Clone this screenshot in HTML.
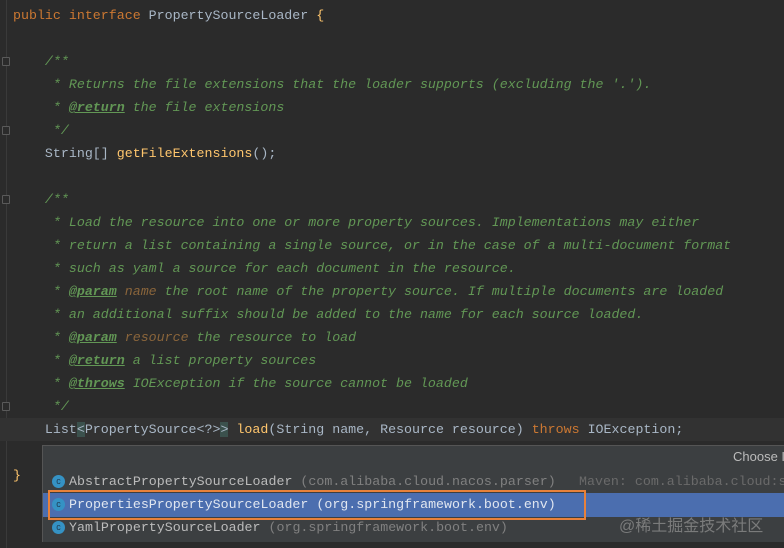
<!DOCTYPE html>
<html><head><meta charset="utf-8"><style>
body{margin:0;width:784px;height:548px;background:#2b2b2b;overflow:hidden;position:relative;font-family:"Liberation Mono",monospace;font-size:13.3px;}
.l{position:absolute;left:13px;white-space:pre;color:#a9b7c6;height:23px;line-height:23px}
.k{color:#cc7832}.c{color:#629755;font-style:italic}.t{color:#629755;font-style:italic;font-weight:bold;text-decoration:underline}
.p{color:#8a653b;font-style:italic}.f{color:#ffc66d}.g{color:#808080}
.gut{position:absolute;left:6px;top:0;width:1px;height:548px;background:#3a3a3a}
.fold{position:absolute;left:2px;width:8px;height:9px;border:1px solid #5a5a5a;border-radius:1px;box-sizing:border-box;background:#2b2b2b}
.pop{position:absolute;left:42px;top:445px;width:742px;height:96px;background:#3c3f41;border-top:1px solid #555;border-left:1px solid #555}
.row{position:absolute;left:0;width:742px;height:24px;line-height:24px;white-space:pre;color:#bbbbbb}
.ic{position:absolute;left:9px;top:5px;width:13px;height:13px;border-radius:50%;background:#3592c4;color:#1d3b52;font-size:9px;line-height:13px;text-align:center;font-family:"Liberation Sans",sans-serif}
.nm{position:absolute;left:26px}
</style></head><body>
<div class="gut"></div>
<div class="fold" style="top:57px"></div><div class="fold" style="top:126px"></div>
<div class="fold" style="top:195px"></div><div class="fold" style="top:402px"></div>
<div class="l" style="top:4px"><span class="k">public interface </span>PropertySourceLoader <span class="f">{</span></div>
<div class="l c" style="top:50px">    /**</div>
<div class="l c" style="top:73px">     * Returns the file extensions that the loader supports (excluding the '.').</div>
<div class="l c" style="top:96px">     * <span class="t">@return</span> the file extensions</div>
<div class="l c" style="top:119px">     */</div>
<div class="l" style="top:142px">    String[] <span class="f">getFileExtensions</span>();</div>
<div class="l c" style="top:188px">    /**</div>
<div class="l c" style="top:211px">     * Load the resource into one or more property sources. Implementations may either</div>
<div class="l c" style="top:234px">     * return a list containing a single source, or in the case of a multi-document format</div>
<div class="l c" style="top:257px">     * such as yaml a source for each document in the resource.</div>
<div class="l c" style="top:280px">     * <span class="t">@param</span> <span class="p">name</span> the root name of the property source. If multiple documents are loaded</div>
<div class="l c" style="top:303px">     * an additional suffix should be added to the name for each source loaded.</div>
<div class="l c" style="top:326px">     * <span class="t">@param</span> <span class="p">resource</span> the resource to load</div>
<div class="l c" style="top:349px">     * <span class="t">@return</span> a list property sources</div>
<div class="l c" style="top:372px">     * <span class="t">@throws</span> IOException if the source cannot be loaded</div>
<div class="l c" style="top:395px">     */</div>
<div style="position:absolute;left:0;top:418px;width:784px;height:23px;background:#323232"></div>
<div class="l" style="top:418px">    List<span style="background:#3b514d">&lt;</span>PropertySource&lt;?&gt;<span style="background:#3b514d">&gt;</span> <span class="f">load</span>(String name, Resource resource) <span class="k">throws</span> IOException;</div>
<div class="l" style="top:464px"><span class="f">}</span></div>
<div class="pop">
<div style="position:absolute;left:690px;top:3px;color:#bbb;font-family:'Liberation Sans',sans-serif;font-size:13px;white-space:pre">Choose I</div>
<div class="row" style="top:24px"><span class="ic">c</span><span class="nm">AbstractPropertySourceLoader <span class="g">(com.alibaba.cloud.nacos.parser)</span></span><span class="g" style="position:absolute;left:536px;color:#6a6a6a">Maven: com.alibaba.cloud:s</span></div>
<div class="row" style="top:47px;background:#4b6eaf;color:#e0e6f0"><span class="ic">c</span><span class="nm">PropertiesPropertySourceLoader (org.springframework.boot.env)</span></div>
<div class="row" style="top:70px"><span class="ic">c</span><span class="nm">YamlPropertySourceLoader <span class="g">(org.springframework.boot.env)</span></span></div>
<div style="position:absolute;left:5px;top:44px;width:538px;height:30px;border:2px solid #e8813a;box-sizing:border-box"></div>
<div style="position:absolute;left:576px;top:66px;color:#8a8a8a;font-family:'Liberation Sans','Noto Sans CJK SC',sans-serif;font-size:16px;opacity:.8">@稀土掘金技术社区</div>
</div>
</body></html>
